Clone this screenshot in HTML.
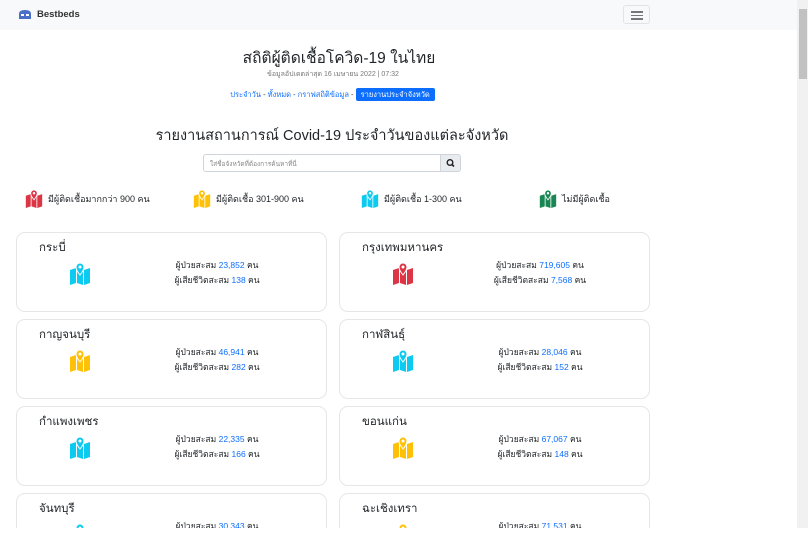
<!DOCTYPE html>
<html style="overflow:hidden;height:541px"><head><meta charset="utf-8"><style>
*{box-sizing:border-box;margin:0;padding:0}
body{width:812px;height:541px;background:#fff;font-family:"Liberation Sans","Noto Sans CJK SC",sans-serif;color:#212529;position:relative;overflow:hidden}
#w{position:absolute;left:0;top:0;width:812px;height:528px;overflow:hidden}
.nav{position:absolute;left:0;top:0;width:797px;height:30px;background:#f8f9fa}
.brand{position:absolute;left:37px;top:9px;font-size:9.5px;color:#333;font-weight:bold}
.tog{position:absolute;left:623px;top:5px;width:27px;height:19px;border:1px solid #e3e3e3;border-radius:3px}
.tog i{position:absolute;left:7px;width:12px;height:1.5px;background:#777}
.sb{position:absolute;left:797px;top:0;width:11px;height:528px;background:#f1f1f1}
.sb div{position:absolute;left:2px;top:9px;width:8px;height:70px;background:#c1c1c1}
.c{position:absolute;text-align:center;white-space:nowrap}
.card{position:absolute;width:311px;height:80px;border:1px solid #e6e6e6;border-radius:9px;background:#fff}
.card h3{position:absolute;left:22px;top:6px;font-size:11.5px;font-weight:normal}
.card svg{position:absolute;left:52px;top:30px}
.card .t{position:absolute;left:140px;top:25px;width:120px;text-align:center;font-size:8.5px;line-height:15px;white-space:nowrap}
.b{color:#0d6efd}
.leg{position:absolute;top:190px;font-size:9px;display:flex;align-items:center;gap:5px;white-space:nowrap}
</style></head><body><div id="w">
<svg width="0" height="0" style="position:absolute"><defs><symbol id="m" viewBox="0 0 22 22"><path d="M1 7 L7 5 L7 20 L1 22Z M8 5 L14 7 L14 22 L8 20Z M15 7 L21 5 L21 20 L15 22Z" fill="currentColor"/><path d="M11 0 a4 4 0 0 1 4 4 c0 3 -4 8 -4 8 c0 0 -4 -5 -4 -8 a4 4 0 0 1 4 -4z" fill="currentColor" stroke="#fff" stroke-width="1"/><circle cx="11" cy="4" r="1.5" fill="#fff"/></symbol></defs></svg>
<div class="nav"><svg style="position:absolute;left:18px;top:9px" width="14" height="11" viewBox="0 0 14 11"><path d="M1 10 V5 Q1 1 7 1 Q13 1 13 5 V10Z" fill="#4a6fc9"/><rect x="3" y="5" width="3" height="2" fill="#fff"/><rect x="8" y="5" width="3" height="2" fill="#fff"/></svg><span class="brand">Bestbeds</span>
<div class="tog"><i style="top:5px"></i><i style="top:8.5px"></i><i style="top:12px"></i></div></div>
<div class="sb"><div></div></div>
<div class="c" style="left:0;width:678px;top:45px;font-size:15.5px">สถิติผู้ติดเชื้อโควิด-19 ในไทย</div>
<div class="c" style="left:0;width:666px;top:69px;font-size:7px;color:#777">ข้อมูลอัปเดตล่าสุด 16 เมษายน 2022 | 07:32</div>
<div class="c" style="left:0;width:665px;top:89px;font-size:7.5px;color:#333"><span class="b">ประจำวัน</span> - <span class="b">ทั้งหมด</span> - <span class="b">กราฟสถิติข้อมูล</span> - <span style="background:#0d6efd;color:#fff;padding:2px 5px;border-radius:2px">รายงานประจำจังหวัด</span></div>
<div class="c" style="left:0;width:664px;top:124px;font-size:14.5px">รายงานสถานการณ์ Covid-19 ประจำวันของแต่ละจังหวัด</div>
<div style="position:absolute;left:203px;top:154px;width:238px;height:18px;border:1px solid #ced4da;border-radius:3px 0 0 3px;font-size:6.5px;color:#888;padding:4px 6px">ใส่ชื่อจังหวัดที่ต้องการค้นหาที่นี่</div>
<div style="position:absolute;left:440px;top:154px;width:21px;height:18px;background:#e9ecef;border:1px solid #ced4da;border-radius:0 3px 3px 0"><svg width="19" height="16" viewBox="0 0 19 16"><circle cx="9" cy="7.5" r="2.8" fill="none" stroke="#222" stroke-width="1.4"/><path d="M11 9.5 L13 11.5" stroke="#222" stroke-width="1.6"/></svg></div>
<div class="leg" style="left:25px"><svg width="18" height="18" style="color:#dc3545"><use href="#m"/></svg>มีผู้ติดเชื้อมากกว่า 900 คน</div>
<div class="leg" style="left:193px"><svg width="18" height="18" style="color:#ffc107"><use href="#m"/></svg>มีผู้ติดเชื้อ 301-900 คน</div>
<div class="leg" style="left:361px"><svg width="18" height="18" style="color:#0dcaf0"><use href="#m"/></svg>มีผู้ติดเชื้อ 1-300 คน</div>
<div class="leg" style="left:539px"><svg width="18" height="18" style="color:#198754"><use href="#m"/></svg>ไม่มีผู้ติดเชื้อ</div>

<div class="card" style="left:16px;top:232px"><h3>กระบี่</h3><svg width="22" height="22" style="color:#0dcaf0"><use href="#m"/></svg><div class="t">ผู้ป่วยสะสม <span class="b">23,852</span> คน<br>ผู้เสียชีวิตสะสม <span class="b">138</span> คน</div></div>
<div class="card" style="left:339px;top:232px"><h3>กรุงเทพมหานคร</h3><svg width="22" height="22" style="color:#dc3545"><use href="#m"/></svg><div class="t">ผู้ป่วยสะสม <span class="b">719,605</span> คน<br>ผู้เสียชีวิตสะสม <span class="b">7,568</span> คน</div></div>
<div class="card" style="left:16px;top:319px"><h3>กาญจนบุรี</h3><svg width="22" height="22" style="color:#ffc107"><use href="#m"/></svg><div class="t">ผู้ป่วยสะสม <span class="b">46,941</span> คน<br>ผู้เสียชีวิตสะสม <span class="b">282</span> คน</div></div>
<div class="card" style="left:339px;top:319px"><h3>กาฬสินธุ์</h3><svg width="22" height="22" style="color:#0dcaf0"><use href="#m"/></svg><div class="t">ผู้ป่วยสะสม <span class="b">28,046</span> คน<br>ผู้เสียชีวิตสะสม <span class="b">152</span> คน</div></div>
<div class="card" style="left:16px;top:406px"><h3>กำแพงเพชร</h3><svg width="22" height="22" style="color:#0dcaf0"><use href="#m"/></svg><div class="t">ผู้ป่วยสะสม <span class="b">22,335</span> คน<br>ผู้เสียชีวิตสะสม <span class="b">166</span> คน</div></div>
<div class="card" style="left:339px;top:406px"><h3>ขอนแก่น</h3><svg width="22" height="22" style="color:#ffc107"><use href="#m"/></svg><div class="t">ผู้ป่วยสะสม <span class="b">67,067</span> คน<br>ผู้เสียชีวิตสะสม <span class="b">148</span> คน</div></div>
<div class="card" style="left:16px;top:493px"><h3>จันทบุรี</h3><svg width="22" height="22" style="color:#0dcaf0"><use href="#m"/></svg><div class="t">ผู้ป่วยสะสม <span class="b">30,343</span> คน<br>ผู้เสียชีวิตสะสม <span class="b">90</span> คน</div></div>
<div class="card" style="left:339px;top:493px"><h3>ฉะเชิงเทรา</h3><svg width="22" height="22" style="color:#ffc107"><use href="#m"/></svg><div class="t">ผู้ป่วยสะสม <span class="b">71,531</span> คน<br>ผู้เสียชีวิตสะสม <span class="b">200</span> คน</div></div>
</div></body></html>
